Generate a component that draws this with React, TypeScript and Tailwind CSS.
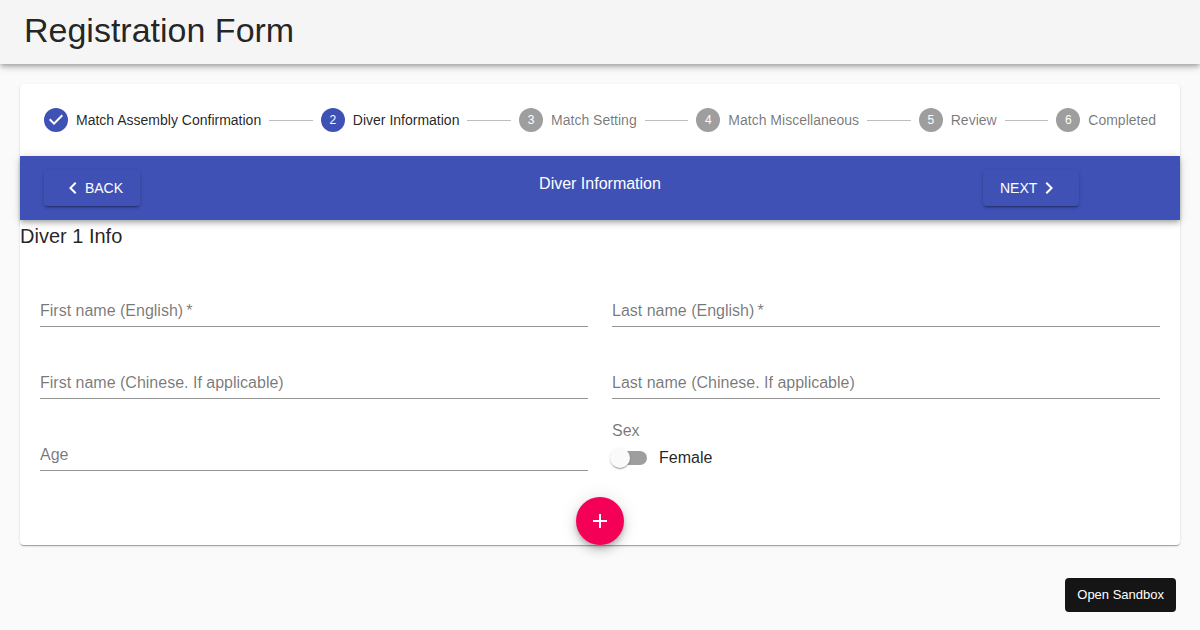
import { Fragment, useState } from "react";

interface StepIconProps {
  index: number;
  active: boolean;
  completed: boolean;
}

interface TextFieldProps {
  id: string;
  label: string;
  required?: boolean;
}

const steps = [
  "Match Assembly Confirmation",
  "Diver Information",
  "Match Setting",
  "Match Miscellaneous",
  "Review",
  "Completed",
];

const activeStep = 1;

const navButton =
  "flex h-9 min-w-24 items-center justify-center rounded bg-[#3f51b5] px-4 text-sm uppercase text-white shadow-[0_3px_1px_-2px_rgba(0,0,0,0.2),0_2px_2px_0_rgba(0,0,0,0.14),0_1px_5px_0_rgba(0,0,0,0.12)]";

const Icon = ({ path, className = "size-6" }: { path: string; className?: string }) => (
  <svg viewBox="0 0 24 24" fill="currentColor" aria-hidden="true" className={className}>
    <path d={path} />
  </svg>
);

const StepIcon = ({ index, active, completed }: StepIconProps) => {
  if (completed) {
    return (
      <Icon
        className="size-6 text-[#3f51b5]"
        path="M12 0a12 12 0 1 0 0 24 12 12 0 0 0 0-24zm-2 17l-5-5 1.4-1.4 3.6 3.6 7.6-7.6L19 8l-9 9z"
      />
    );
  }
  return (
    <span
      className={`flex size-6 items-center justify-center rounded-full text-xs text-white ${
        active ? "bg-[#3f51b5]" : "bg-[#9e9e9e]"
      }`}
    >
      {index + 1}
    </span>
  );
};

const Stepper = () => (
  <ol className="flex items-center p-6">
    {steps.map((label, index) => (
      <Fragment key={label}>
        {index > 0 && <li aria-hidden="true" className="mx-2 h-px flex-auto bg-[#bdbdbd]" />}
        <li className="flex items-center gap-2">
          <StepIcon index={index} active={index === activeStep} completed={index < activeStep} />
          <span
            className={`text-sm whitespace-nowrap ${
              index <= activeStep ? "text-black/87" : "text-black/54"
            }`}
          >
            {label}
          </span>
        </li>
      </Fragment>
    ))}
  </ol>
);

const TextField = ({ id, label, required = false }: TextFieldProps) => (
  <div className="relative h-12 border-b border-black/42 pt-4">
    <input
      id={id}
      required={required}
      placeholder=" "
      className="peer h-full w-full bg-transparent text-base outline-none"
    />
    <label
      htmlFor={id}
      className="pointer-events-none absolute top-0 left-0 text-xs leading-4 text-black/54 peer-placeholder-shown:top-6 peer-placeholder-shown:text-base peer-placeholder-shown:leading-4 peer-focus:top-0 peer-focus:text-xs"
    >
      {label}
      {required && "\u2009*"}
    </label>
  </div>
);

export default function App() {
  const [male, setMale] = useState(false);

  return (
    <div className="min-h-screen bg-[#fafafa] font-[Helvetica,'Liberation_Sans',Arial,sans-serif] text-black/87">
      <header className="flex h-16 items-center bg-[#f5f5f5] px-6 pb-1 shadow-[0_2px_4px_-1px_rgba(0,0,0,0.2),0_4px_5px_0_rgba(0,0,0,0.14),0_1px_10px_0_rgba(0,0,0,0.12)]">
        <h1 className="text-[34px] leading-10">Registration Form</h1>
      </header>

      <main className="m-5 rounded bg-white shadow-[0_2px_1px_-1px_rgba(0,0,0,0.2),0_1px_1px_0_rgba(0,0,0,0.14),0_1px_3px_0_rgba(0,0,0,0.12)]">
        <Stepper />

        <div className="flex h-16 items-center bg-[#3f51b5] px-6 text-white shadow-[0_2px_4px_-1px_rgba(0,0,0,0.2),0_4px_5px_0_rgba(0,0,0,0.14),0_1px_10px_0_rgba(0,0,0,0.12)]">
          <div className="grid flex-1 grid-cols-12 items-start">
            <div className="col-span-2">
              <button type="button" className={navButton}>
                <Icon path="M15.41 7.41L14 6l-6 6 6 6 1.41-1.41L10.83 12z" />
                Back
              </button>
            </div>
            <p className="col-span-8 text-center text-base leading-7">Diver Information</p>
            <div className="col-span-2 pl-3">
              <button type="button" className={navButton}>
                Next
                <Icon path="M10 6L8.59 7.41 13.17 12l-4.58 4.59L10 18l6-6z" />
              </button>
            </div>
          </div>
        </div>

        <form>
          <h2 className="text-xl leading-8">Diver 1 Info</h2>
          <div className="grid grid-cols-2 gap-6 px-5 pt-[27px]">
            <TextField id="first-name-en" label="First name (English)" required />
            <TextField id="last-name-en" label="Last name (English)" required />
            <TextField id="first-name-zh" label="First name (Chinese. If applicable)" />
            <TextField id="last-name-zh" label="Last name (Chinese. If applicable)" />
            <TextField id="age" label="Age" />
            <fieldset>
              <legend className="text-base leading-4 text-black/54">Sex</legend>
              <label className="ml-px flex h-[38px] w-fit items-center gap-3 text-base">
                <input
                  type="checkbox"
                  role="switch"
                  checked={male}
                  onChange={(e) => setMale(e.target.checked)}
                  className="relative h-3.5 w-[34px] appearance-none rounded-full bg-[#9e9e9e] before:absolute before:-top-[3px] before:-left-[3px] before:size-5 before:rounded-full before:bg-[#fafafa] before:shadow-[0_2px_1px_-1px_rgba(0,0,0,0.2),0_1px_1px_0_rgba(0,0,0,0.14),0_1px_3px_0_rgba(0,0,0,0.12)] checked:bg-[#f50057]/50 checked:before:left-[17px] checked:before:bg-[#f50057]"
                />
                {male ? "Male" : "Female"}
              </label>
            </fieldset>
          </div>
          <div className="mt-5 flex justify-center">
            <button
              type="button"
              aria-label="Add diver"
              className="flex size-12 items-center justify-center rounded-full bg-[#f50057] text-white shadow-[0_3px_5px_-1px_rgba(0,0,0,0.2),0_6px_10px_0_rgba(0,0,0,0.14),0_1px_18px_0_rgba(0,0,0,0.12)]"
            >
              <Icon path="M19 13h-6v6h-2v-6H5v-2h6V5h2v6h6v2z" />
            </button>
          </div>
        </form>
      </main>

      <button
        type="button"
        className="fixed right-6 bottom-[18px] h-[34px] rounded bg-[#151515] px-3 text-[13px] text-white"
      >
        Open Sandbox
      </button>
    </div>
  );
}
